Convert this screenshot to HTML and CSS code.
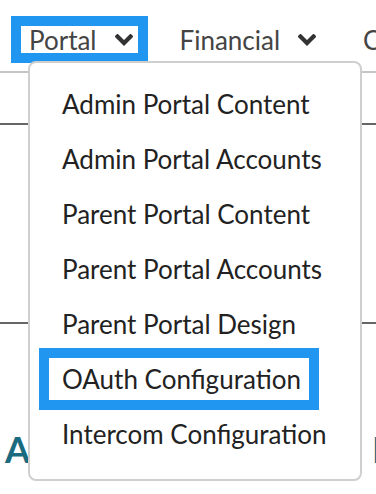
FILE: index.html
```html
<!DOCTYPE html>
<html>
  <head>
  <meta charset='utf-8'>
  <link rel="stylesheet" href="styles.css">
  </head>

  <body>
  <div class="nav">
    <div class="nav-item focused">Portal
      <svg class="chev" width="18" height="12" viewBox="0 0 18 12"><polyline points="2.5,2.5 9,9 15.5,2.5" /></svg>
    </div>
    <div class="nav-item">Financial
      <svg class="chev" width="18" height="12" viewBox="0 0 18 12"><polyline points="2.5,2.5 9,9 15.5,2.5" /></svg>
    </div>
    <div class="nav-item">Communication</div>
  </div>

  <div class="section"></div>

  <div class="titles">
    <h2>Accounts</h2>
    <h2>Portal</h2>
  </div>

  <div class="dropdown">
    <a>Admin Portal Content</a>
    <a>Admin Portal Accounts</a>
    <a>Parent Portal Content</a>
    <a>Parent Portal Accounts</a>
    <a>Parent Portal Design</a>
    <a class="focused">OAuth Configuration</a>
    <a>Intercom Configuration</a>
  </div>
  </body>
</html>
```

FILE: styles.css
```css
body {
  margin: 0;
  font-family: Lato, "Open Sans", sans-serif;
  overflow: hidden;
}

.nav {
  display: flex;
  gap: 14px;
  padding: 16px 0 0 11px;
  height: 55px;
  border-bottom: 2px solid #c4c4c4;
  white-space: nowrap;
  overflow: hidden;
}

.nav-item {
  display: flex;
  align-items: center;
  gap: 18px;
  height: 27px;
  padding: 0 5px 0 8px;
  border: 10px solid transparent;
  font-size: 26px;
  color: #444;
}

.nav-item.focused {
  border-color: #2196f0;
}

.chev {
  fill: none;
  stroke: #333;
  stroke-width: 4.2;
  stroke-linecap: square;
}

.section {
  margin-top: 50px;
  height: 197px;
  border-top: 2px solid #666;
  border-bottom: 2px solid #666;
}

.titles {
  display: grid;
  grid-template-columns: 367px 1fr;
  padding-left: 5px;
  margin-top: 103px;
  white-space: nowrap;
  overflow: hidden;
}

.titles h2 {
  margin: 0;
  font-size: 36px;
  font-weight: bold;
  color: #1a6a80;
}

.dropdown {
  position: absolute;
  left: 28px;
  top: 61px;
  width: 330px;
  height: 396px;
  padding-top: 20px;
  background: #fff;
  border: 2px solid #cfcfcf;
  border-radius: 8px;
}

.dropdown a {
  display: block;
  width: fit-content;
  height: 42px;
  line-height: 42px;
  margin: 0 0 13px 19px;
  padding: 0 8px 0 13px;
  font-size: 26px;
  color: #222;
}

.dropdown a.focused {
  outline: 10px solid #2196f0;
}
```
